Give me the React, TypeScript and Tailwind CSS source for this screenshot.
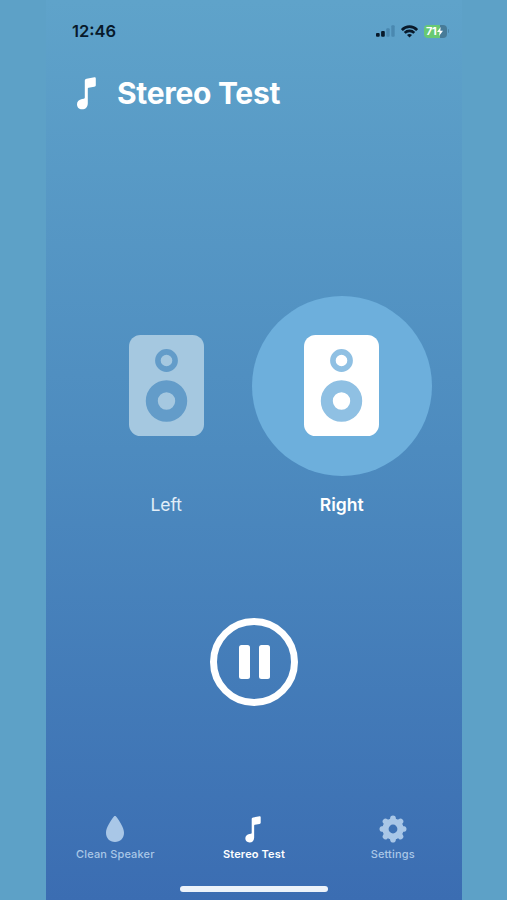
import { useState } from "react";

type Side = "left" | "right";

const tabs = [
  { id: "clean", label: "Clean Speaker", Icon: DropIcon },
  { id: "stereo", label: "Stereo Test", Icon: TabNoteIcon },
  { id: "settings", label: "Settings", Icon: GearIcon },
];

const gearAngles = [0, 45, 90, 135, 180, 225, 270, 315];

function NoteIcon({ className }: { className: string }) {
  return (
    <svg viewBox="0 0 20 33" className={className} fill="currentColor">
      <path d="M7.8 3.8C7.8 2.7 8.4 2 9.6 1.8L17.4 0.3C18.3 0.1 18.8 0.5 18.8 1.4V7.9C18.8 8.9 18.3 9.5 17.3 9.7L11.6 10.8C11 10.9 10.8 11.2 10.8 11.8V26.2C10.8 29.9 8.6 32.3 5.1 32.3C2 32.3 0 30.3 0 27.3C0 24.4 2.1 22.5 5 22L6.8 21.7C7.5 21.5 7.8 21.2 7.8 20.5Z" />
    </svg>
  );
}

function TabNoteIcon() {
  return <NoteIcon className="h-[27px] w-[17px]" />;
}

function DropIcon() {
  return (
    <svg viewBox="0 0 18 26" className="h-[26px] w-[18px]" fill="currentColor">
      <path d="M9 0C9.8 0 10.3 0.7 10.9 1.6C13.6 5.6 18 11.7 18 16.8C18 22.3 14.3 26 9 26C3.7 26 0 22.3 0 16.8C0 11.7 4.4 5.6 7.1 1.6C7.7 0.7 8.2 0 9 0Z" />
    </svg>
  );
}

function GearIcon() {
  return (
    <svg viewBox="0 0 28 28" className="size-[28px]" fill="currentColor">
      {/* ring plus eight rounded teeth */}
      <circle cx="14" cy="14" r="7.5" fill="none" stroke="currentColor" strokeWidth="6.2" />
      {gearAngles.map((a) => (
        <path
          key={a}
          transform={`rotate(${a} 14 14)`}
          d="M10.2 5.2C11 4.7 11.1 3.8 11.2 2.8C11.4 1.3 12.5 0.5 14 0.5C15.5 0.5 16.6 1.3 16.8 2.8C16.9 3.8 17 4.7 17.8 5.2Z"
        />
      ))}
    </svg>
  );
}

function StatusIcons() {
  return (
    <div className="flex items-center">
      <svg viewBox="0 0 19 12" className="h-[12px] w-[19px]">
        <rect x="0" y="8.1" width="3.7" height="3.6" rx="1" fill="#08192a" />
        <rect x="5.1" y="6" width="3.7" height="5.7" rx="1" fill="#08192a" />
        <rect x="10.3" y="3.2" width="3.4" height="8.5" rx="1" fill="#4a88b0" />
        <rect x="15.3" y="0.2" width="3.4" height="11.5" rx="1" fill="#4a88b0" />
      </svg>
      <svg viewBox="0 0 17 13" className="ml-[6px] h-[13px] w-[17px]" fill="none" stroke="#08192a" strokeWidth="2.6">
        <path d="M0.9 5C5.1 0.5 11.9 0.5 16.1 5" />
        <path d="M3.7 7.9C6.3 5.2 10.7 5.2 13.3 7.9" />
        <path d="M6 9.9C7.4 8.6 9.6 8.6 11 9.9L8.5 12.6Z" fill="#08192a" stroke="none" />
      </svg>
      <div className="ml-[6px] flex h-[13px] w-[23px] items-center rounded-[4px] bg-linear-to-r from-[#68c973] from-70% to-[#477b98] to-70% pl-[2.5px] text-[11px] leading-none font-bold tracking-[-0.3px] text-white">
        71
        <svg viewBox="0 0 6 9" className="h-[9px] w-[6px] shrink-0" fill="white">
          <path d="M3.7 0L0 5H2.6L2.1 9L6 3.7H3.3Z" />
        </svg>
      </div>
      <div className="ml-px h-[4px] w-[1.5px] rounded-r-full bg-[#4a86aa]" />
    </div>
  );
}

function Speaker({ active }: { active: boolean }) {
  const cone = active ? "#8fc0e3" : "#639cc9";
  const body = active ? "#ffffff" : "#a5c8e0";
  return (
    <svg viewBox="0 0 75 101" className="h-[101px] w-[75px]">
      <rect width="75" height="101" rx="11.5" fill={body} />
      <circle cx="37.5" cy="25.5" r="8.6" fill="none" stroke={cone} strokeWidth="5.6" />
      <circle cx="37.5" cy="66" r="14.7" fill="none" stroke={cone} strokeWidth="12" />
    </svg>
  );
}

function Channel({ label, active, onSelect }: { label: string; active: boolean; onSelect: () => void }) {
  return (
    <button onClick={onSelect} className="flex w-[175.5px] flex-col items-center">
      <span className={`flex size-[180px] shrink-0 items-center justify-center rounded-full ${active ? "bg-[#6dafdc]" : ""}`}>
        <Speaker active={active} />
      </span>
      <span className={`mt-[16px] text-[17.5px] leading-[26px] ${active ? "font-semibold text-white" : "text-[#e2eef8]"}`}>
        {label}
      </span>
    </button>
  );
}

export default function App() {
  const [side, setSide] = useState<Side>("right");

  return (
    <div className="flex h-[900px] w-[507px] overflow-hidden bg-[#5da1c7] pl-[46px] font-['Inter',sans-serif]">
      <main className="flex h-full w-[416px] flex-col bg-linear-to-b from-[#5fa3ca] via-[#4d8bbf] to-[#3b6db2]">
        {/* Status bar */}
        <div className="flex h-[62px] shrink-0 items-center justify-between pr-[13px] pl-[26px]">
          <span className="text-[16.5px] font-semibold text-[#08192a]">12:46</span>
          <StatusIcons />
        </div>

        <header className="flex h-[62px] shrink-0 items-center pl-[30.5px] text-white">
          <NoteIcon className="h-[33px] w-[20px]" />
          <h1 className="ml-[20.5px] text-[30px] leading-none font-bold tracking-[-0.3px]">Stereo Test</h1>
        </header>

        {/* Speakers */}
        <section className="mt-[171.5px] flex pl-[32.5px]">
          <Channel label="Left" active={side === "left"} onSelect={() => setSide("left")} />
          <Channel label="Right" active={side === "right"} onSelect={() => setSide("right")} />
        </section>

        <button className="mt-[100px] flex size-[88px] shrink-0 items-center justify-center gap-[9px] self-center rounded-full border-[7px] border-white">
          <span className="h-[34px] w-[11px] rounded-[2.5px] bg-white" />
          <span className="h-[34px] w-[11px] rounded-[2.5px] bg-white" />
        </button>

        <nav className="mt-auto grid grid-cols-3">
          {tabs.map(({ id, label, Icon }) => (
            <button
              key={id}
              className={`flex flex-col items-center ${id === "stereo" ? "text-white" : "text-[#a9c7e7]"}`}
            >
              <span className="flex h-[28px] items-center">
                <Icon />
              </span>
              <span
                className={`mt-[3px] text-[11px] leading-[16px] tracking-[0.15px] ${id === "stereo" ? "font-semibold" : "font-medium"}`}
              >
                {label}
              </span>
            </button>
          ))}
        </nav>

        {/* Home indicator */}
        <div className="mt-[24px] mb-[8.5px] h-[5.5px] w-[148px] shrink-0 self-center rounded-full bg-[#edf3fa]" />
      </main>
    </div>
  );
}
